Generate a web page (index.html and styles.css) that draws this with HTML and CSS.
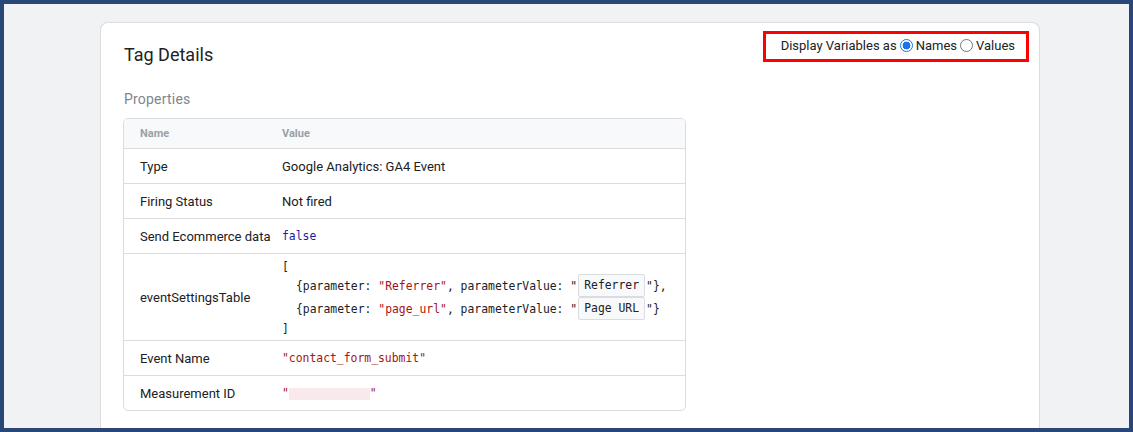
FILE: index.html
```html
<!DOCTYPE html>
<html>
<head>
<meta charset="utf-8">
<link rel="stylesheet" href="styles.css">
</head>
<body>
<div class="frame">
  <div class="card">
    <div class="card-head">
      <h1 class="title">Tag Details</h1>
      <div class="display-opts">
        <span class="opt-label">Display Variables as</span>
        <label class="radio"><span class="dot checked"></span>Names</label>
        <label class="radio"><span class="dot"></span>Values</label>
      </div>
    </div>
    <div class="section-title">Properties</div>
    <div class="table">
      <div class="row head">
        <div class="c1">Name</div>
        <div class="c2">Value</div>
      </div>
      <div class="row">
        <div class="c1">Type</div>
        <div class="c2">Google Analytics: GA4 Event</div>
      </div>
      <div class="row">
        <div class="c1">Firing Status</div>
        <div class="c2">Not fired</div>
      </div>
      <div class="row">
        <div class="c1">Send Ecommerce data</div>
        <div class="c2 code"><span class="kw">false</span></div>
      </div>
      <div class="row tall">
        <div class="c1">eventSettingsTable</div>
        <div class="c2 code block">
          <div class="line open">[</div>
          <div class="line ind">{parameter: <span class="str">"Referrer"</span>, parameterValue: "<span class="var">Referrer</span>"},</div>
          <div class="line ind">{parameter: <span class="str">"page_url"</span>, parameterValue: "<span class="var">Page URL</span>"}</div>
          <div class="line close">]</div>
        </div>
      </div>
      <div class="row">
        <div class="c1">Event Name</div>
        <div class="c2 code"><span class="str">"contact_form_submit"</span></div>
      </div>
      <div class="row last">
        <div class="c1">Measurement ID</div>
        <div class="c2 code"><span class="str">"<span class="blur"></span>"</span></div>
      </div>
    </div>
  </div>
</div>
</body>
</html>
```
FILE: styles.css
```css
* { box-sizing: border-box; }
html, body { margin: 0; padding: 0; }
body {
  font-family: Roboto, "Noto Sans", Arial, sans-serif;
  color: #202124;
  width: 1133px;
  height: 432px;
  overflow: hidden;
}
.frame {
  width: 1133px;
  height: 432px;
  border: 4px solid #284678;
  background: #f1f2f4;
  padding: 18px 89px 0 96px;
  overflow: hidden;
}
.card {
  background: #fff;
  border: 1px solid #dadce0;
  border-bottom: none;
  border-radius: 8px 8px 0 0;
  height: 420px;
  padding: 9px 10px 0 23px;
}
.card-head {
  display: flex;
  justify-content: space-between;
  align-items: flex-start;
}
.title {
  margin: 11px 0 0 0;
  font-size: 18px;
  font-weight: 400;
  line-height: 24px;
}
.display-opts {
  display: flex;
  align-items: center;
  border: 3px solid #ff0000;
  height: 31px;
  margin-top: -1px;
  padding: 0 11px 3px 15px;
  font-size: 13px;
  color: #202124;
}
.opt-label { margin-right: 3px; }
.radio {
  display: flex;
  align-items: center;
}
.radio + .radio { margin-left: 3px; }
.dot {
  width: 13px;
  height: 13px;
  border-radius: 50%;
  border: 1px solid #767676;
  margin-right: 3px;
  display: inline-block;
  background: #fff;
}
.dot.checked {
  border: 1px solid #1a73e8;
  background: radial-gradient(circle, #1a73e8 0 3.6px, #fff 4.2px);
}
.section-title {
  margin-top: 23px;
  font-size: 14px;
  color: #80868b;
  line-height: 18px;
  letter-spacing: 0.2px;
}
.table {
  margin-top: 10px;
  margin-left: -1px;
  width: 563px;
  border: 1px solid #dadce0;
  border-radius: 5px;
  overflow: hidden;
}
.row {
  display: flex;
  align-items: center;
  height: 35px;
  border-top: 1px solid #dadce0;
  font-size: 13px;
}
.row.head {
  border-top: none;
  height: 29px;
  background: #f8f9fa;
  font-size: 11px;
  font-weight: 700;
  color: #9aa0a6;
}
.row.tall { height: 87px; }
.c1 {
  width: 158px;
  padding-left: 16px;
  flex-shrink: 0;
}
.c2 { flex: 1; }
.code {
  font-family: "DejaVu Sans Mono", "Liberation Mono", monospace;
  font-size: 11.4px;
  color: #202124;
}
.kw { color: #1a1aa6; }
.str { color: #a31515; }
.block {
  align-self: stretch;
  padding-top: 6px;
}
.line {
  height: 23px;
  white-space: pre;
  display: flex;
  align-items: center;
}
.line.open { height: 14px; }
.line.close { height: 18px; }
.line.ind { padding-left: 14px; }
.var {
  display: inline-block;
  border: 1px solid #dadce0;
  background: #f8f9fa;
  border-radius: 2px;
  padding: 0 5px;
  line-height: 21px;
  color: #202124;
  margin: 0 1px;
}
.blur {
  display: inline-block;
  width: 81px;
  height: 12px;
  background: #f9e8ec;
  vertical-align: middle;
}
```
